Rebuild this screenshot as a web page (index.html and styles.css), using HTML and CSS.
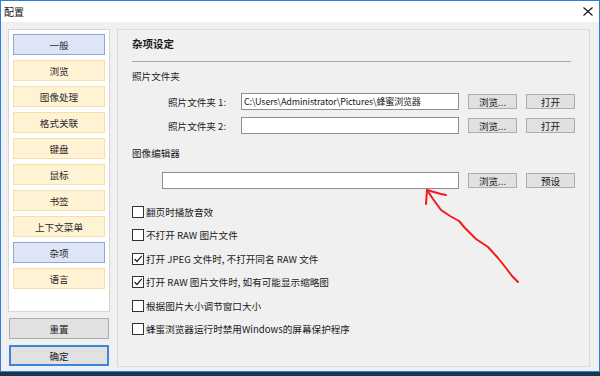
FILE: index.html
```html
<!DOCTYPE html>
<html lang="zh-CN">
<head>
<meta charset="utf-8">
<title>配置</title>
<link rel="stylesheet" href="styles.css">
</head>
<body>
<div class="window">
  <div class="titlebar">
    <span class="title">配置</span>
    <svg class="close" width="10" height="9" viewBox="0 0 10 9"><path d="M0.5 0.5 L9.5 8.5 M9.5 0.5 L0.5 8.5" stroke="#111" stroke-width="1.1" fill="none"/></svg>
  </div>
  <div class="content">
    <div class="sidebar">
      <div class="navbox">
        <div class="nav active">一般</div>
        <div class="nav">浏览</div>
        <div class="nav">图像处理</div>
        <div class="nav">格式关联</div>
        <div class="nav">键盘</div>
        <div class="nav">鼠标</div>
        <div class="nav">书签</div>
        <div class="nav">上下文菜单</div>
        <div class="nav active">杂项</div>
        <div class="nav">语言</div>
      </div>
      <div class="btn wide">重置</div>
      <div class="btn wide default">确定</div>
    </div>
    <div class="panel">
      <div class="heading">杂项设定</div>
      <div class="sep"></div>
      <div class="group-label">照片文件夹</div>
      <div class="row folder first">
        <span class="label">照片文件夹 1:</span>
        <div class="input path">C:\Users\Administrator\Pictures\蜂蜜浏览器</div>
        <div class="btn small">浏览...</div>
        <div class="btn small">打开</div>
      </div>
      <div class="row folder second">
        <span class="label">照片文件夹 2:</span>
        <div class="input"></div>
        <div class="btn small">浏览...</div>
        <div class="btn small">打开</div>
      </div>
      <div class="group-label editor-label">图像编辑器</div>
      <div class="row editor">
        <div class="input wide-input"></div>
        <div class="btn small">浏览...</div>
        <div class="btn small">预设</div>
      </div>
      <div class="checks">
        <div class="check"><span class="box"></span>翻页时播放音效</div>
        <div class="check"><span class="box"></span>不打开 RAW 图片文件</div>
        <div class="check"><span class="box"><svg width="10" height="10" viewBox="0 0 10 10"><path d="M1.5 5 L4 7.5 L8.8 1.8" stroke="#222" stroke-width="1.2" fill="none"/></svg></span>打开 JPEG 文件时, 不打开同名 RAW 文件</div>
        <div class="check"><span class="box"><svg width="10" height="10" viewBox="0 0 10 10"><path d="M1.5 5 L4 7.5 L8.8 1.8" stroke="#222" stroke-width="1.2" fill="none"/></svg></span>打开 RAW 图片文件时, 如有可能显示缩略图</div>
        <div class="check"><span class="box"></span>根据图片大小调节窗口大小</div>
        <div class="check"><span class="box"></span>蜂蜜浏览器运行时禁用Windows的屏幕保护程序</div>
      </div>
    </div>
  </div>
</div>
<svg class="annotation" width="600" height="376" viewBox="0 0 600 376">
  <path d="M426 204 L427 190 L441 194 L446 195" stroke="#f21b1b" stroke-width="2" fill="none" stroke-linecap="round" stroke-linejoin="round"/>
  <path d="M427 190 L433 199 L441 210 L450 216 L459 221 L465 228 L476 239 L488 247 L498 258 L506 268 L512 276 L518 282" stroke="#f21b1b" stroke-width="2" fill="none" stroke-linecap="round" stroke-linejoin="round"/>
</svg>
</body>
</html>
```

FILE: styles.css
```css
* { box-sizing: border-box; }
html, body { margin: 0; padding: 0; }
body {
  width: 600px;
  height: 376px;
  overflow: hidden;
  background: #1c3350;
  font-family: "Noto Sans CJK SC", "Noto Sans", sans-serif;
  font-size: 9.6px;
  color: #1a1a1a;
  position: relative;
}
.window {
  width: 600px;
  height: 372px;
  border: 1px solid #2e7fd8;
  background: #f0f0f0;
  display: flex;
  flex-direction: column;
}
.titlebar {
  height: 21px;
  background: #ffffff;
  display: flex;
  align-items: center;
  padding: 0 6px 0 3px;
}
.title { font-size: 10px; line-height: 14px; color: #111; }
.close { margin-left: auto; }
.content {
  display: flex;
  gap: 7px;
  padding: 7px 8px 0 7px;
}
.sidebar {
  width: 102px;
  display: flex;
  flex-direction: column;
  gap: 6px;
}
.navbox {
  height: 283px;
  background: #ffffff;
  border: 1px solid #d6d6d6;
  padding: 4px;
  display: flex;
  flex-direction: column;
  gap: 5px;
}
.nav {
  height: 21px;
  border: 1px solid #f6dfa8;
  background: #fff3d4;
  display: flex;
  align-items: center;
  justify-content: center;
  color: #2a2a2a;
}
.nav.active {
  background: #dde5f6;
  border-color: #8fa8da;
}
.btn {
  background: #e1e1e1;
  border: 1px solid #adadad;
  display: flex;
  align-items: center;
  justify-content: center;
  color: #1a1a1a;
}
.btn.wide {
  height: 21px;
  margin: 0 1px;
}
.btn.default {
  border: 2px solid #3b86dc;
}
.panel {
  width: 473px;
  height: 338px;
  border: 1px solid #dadada;
  padding: 6px 0 0 14px;
}
.heading {
  font-weight: bold;
  font-size: 10.5px;
  line-height: 16px;
}
.sep {
  width: 439px;
  height: 1px;
  background: #a9a9a9;
  margin-top: 9px;
}
.group-label {
  line-height: 16px;
  margin-top: 6px;
}
.editor-label { margin-top: 11px; }
.row {
  display: flex;
  align-items: center;
  height: 17px;
}
.row.first { margin-top: 9px; }
.row.second { margin-top: 7px; }
.row.folder { padding-left: 36px; }
.row.editor { padding-left: 30px; margin-top: 11px; }
.label { width: 73px; }
.input {
  width: 218px;
  height: 17px;
  background: #ffffff;
  border: 1px solid #8e8e8e;
  margin-right: 9px;
  padding-left: 2px;
  display: flex;
  align-items: center;
  white-space: nowrap;
  overflow: hidden;
}
.input.path { font-size: 9px; letter-spacing: -0.15px; }
.input.wide-input { width: 297px; }
.btn.small {
  width: 49px;
  height: 15px;
  margin-right: 9px;
}
.checks {
  margin-top: 11px;
  display: flex;
  flex-direction: column;
}
.check {
  height: 23.5px;
  display: flex;
  align-items: center;
  white-space: nowrap;
}
.box {
  width: 12px;
  height: 12px;
  border: 1px solid #333333;
  background: #ffffff;
  margin-right: 2px;
  display: flex;
  align-items: center;
  justify-content: center;
}
.annotation {
  position: absolute;
  left: 0;
  top: 0;
  pointer-events: none;
}
```
